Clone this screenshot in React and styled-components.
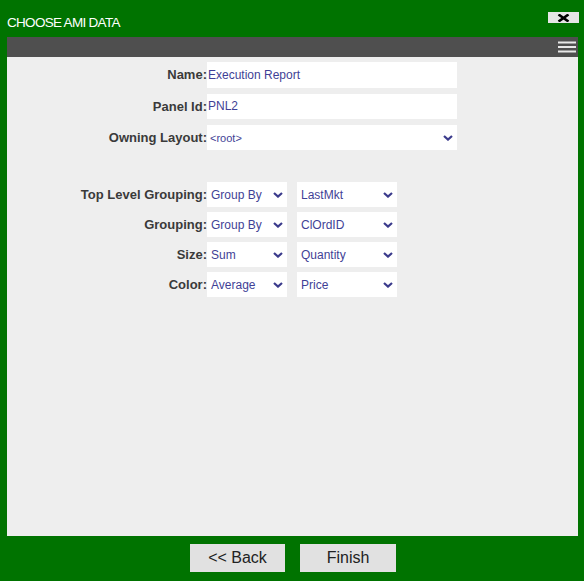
import React from 'react'
import styled, { createGlobalStyle } from 'styled-components'

const GlobalStyle = createGlobalStyle`
  html, body {
    margin: 0;
    padding: 0;
    background: #007300;
  }
  body {
    font-family: "Liberation Sans", Arial, sans-serif;
  }
`

const Window = styled.div`
  width: 584px;
  height: 581px;
  box-sizing: border-box;
  background: #007300;
  display: flex;
  flex-direction: column;
  padding: 0 6px 0 7px;
`

const Header = styled.div`
  height: 37px;
  display: flex;
  align-items: center;
  justify-content: space-between;
  padding-top: 8px;
  box-sizing: border-box;
`

const Title = styled.div`
  color: #ffffff;
  font-size: 13.5px;
  letter-spacing: -0.7px;
  line-height: 14px;
  margin-top: 1px;
`

const CloseButton = styled.div`
  width: 31px;
  height: 11px;
  background: #e6e6e6;
  display: flex;
  align-items: center;
  justify-content: center;
  align-self: flex-start;
  margin-top: 4px;
  margin-right: -1px;
`

const Panel = styled.div`
  height: 499px;
  display: flex;
  flex-direction: column;
  background: #eeeeee;
`

const Toolbar = styled.div`
  height: 20px;
  background: #4f4f4f;
  display: flex;
  align-items: center;
  justify-content: flex-end;
  padding-right: 2px;
`

const Form = styled.div`
  display: grid;
  grid-template-columns: 200px auto;
  align-items: center;
  padding-top: 5px;
`

const Label = styled.div`
  text-align: right;
  font-size: 13px;
  font-weight: bold;
  color: #3a3a3a;
  height: ${({ $h }) => $h}px;
  line-height: ${({ $h }) => $h}px;
  margin-bottom: ${({ $gap }) => $gap}px;
`

const Fields = styled.div`
  display: flex;
  gap: 10px;
  margin-bottom: ${({ $gap }) => $gap}px;
`

const TextInput = styled.div`
  width: 250px;
  height: ${({ $h }) => $h}px;
  background: #ffffff;
  color: #3f3f96;
  font-size: 12px;
  line-height: ${({ $h }) => $h}px;
  padding-left: 1px;
  box-sizing: border-box;
`

const SelectBox = styled.div`
  width: ${({ $w }) => $w}px;
  height: ${({ $h }) => $h}px;
  background: #ffffff;
  color: #3f3f96;
  font-size: ${({ $small }) => ($small ? 11 : 12)}px;
  display: flex;
  align-items: center;
  justify-content: space-between;
  padding: 0 4px 0 ${({ $small }) => ($small ? 3 : 4)}px;
  box-sizing: border-box;
`

const Footer = styled.div`
  flex: 1;
  display: flex;
  justify-content: center;
  align-items: flex-start;
  gap: 15px;
  padding-top: 8px;
  padding-left: 1px;
`

const Button = styled.div`
  width: ${({ $w }) => $w}px;
  height: 28px;
  background: #e1e1e1;
  color: #222222;
  font-size: 16px;
  display: flex;
  align-items: center;
  justify-content: center;
`

const Chevron = () => (
  <svg width="10" height="6" viewBox="0 0 10 6">
    <path d="M1 1 L5 4.6 L9 1" fill="none" stroke="#3b3b8c" strokeWidth="2.2" />
  </svg>
)

const Select = ({ w, h = 25, small, children }) => (
  <SelectBox $w={w} $h={h} $small={small}>
    <span>{children}</span>
    <Chevron />
  </SelectBox>
)

const CloseIcon = () => (
  <svg width="13" height="8" viewBox="0 0 13 8">
    <path d="M1.5 0.5 L11.5 7.5 M11.5 0.5 L1.5 7.5" stroke="#000" strokeWidth="2.6" />
  </svg>
)

const MenuIcon = () => (
  <svg width="18" height="12" viewBox="0 0 18 12">
    <rect x="0" y="0.5" width="18" height="2" fill="#e8e8e8" />
    <rect x="0" y="5" width="18" height="2" fill="#e8e8e8" />
    <rect x="0" y="9.5" width="18" height="2" fill="#e8e8e8" />
  </svg>
)

const groupings = [
  { label: 'Top Level Grouping:', op: 'Group By', field: 'LastMkt' },
  { label: 'Grouping:', op: 'Group By', field: 'ClOrdID' },
  { label: 'Size:', op: 'Sum', field: 'Quantity' },
  { label: 'Color:', op: 'Average', field: 'Price' },
]

export default function App() {
  return (
    <>
      <GlobalStyle />
      <Window>
        <Header>
          <Title>CHOOSE AMI DATA</Title>
          <CloseButton>
            <CloseIcon />
          </CloseButton>
        </Header>
        <Panel>
          <Toolbar>
            <MenuIcon />
          </Toolbar>
          <Form>
            <Label $h={26} $gap={6}>Name:</Label>
            <Fields $gap={6}>
              <TextInput $h={26}>Execution Report</TextInput>
            </Fields>
            <Label $h={25} $gap={6}>Panel Id:</Label>
            <Fields $gap={6}>
              <TextInput $h={25}>PNL2</TextInput>
            </Fields>
            <Label $h={25} $gap={32}>Owning Layout:</Label>
            <Fields $gap={32}>
              <Select w={250} small>&lt;root&gt;</Select>
            </Fields>
            {groupings.map((g) => (
              <React.Fragment key={g.label}>
                <Label $h={25} $gap={5}>{g.label}</Label>
                <Fields $gap={5}>
                  <Select w={80}>{g.op}</Select>
                  <Select w={100}>{g.field}</Select>
                </Fields>
              </React.Fragment>
            ))}
          </Form>
        </Panel>
        <Footer>
          <Button $w={95}>&lt;&lt; Back</Button>
          <Button $w={96}>Finish</Button>
        </Footer>
      </Window>
    </>
  )
}
